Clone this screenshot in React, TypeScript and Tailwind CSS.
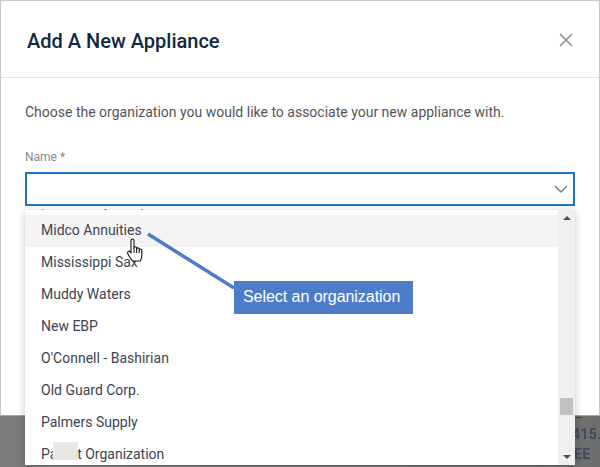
const items = [
  "Mississippi Sax",
  "Muddy Waters",
  "New EBP",
  "O'Connell - Bashirian",
  "Old Guard Corp.",
  "Palmers Supply",
];

function HandCursor() {
  return (
    <svg width="18" height="26" viewBox="0 0 18 26" className="absolute left-[126px] top-[238px]">
      <path
        d="M5 2.500c0-2 3-2 3 0V10c0-1.600 2.600-1.600 2.600 0v1c0-1.500 2.600-1.500 2.600 0v1c0-1.400 2.600-1.400 2.600 0v5.500c0 2.500-.7 3.500-1.500 5.500H6.500C5 21 3.500 19.500 1.800 15.500c-.8-2 1.400-3.200 2.500-1.500L5 15z"
        fill="#fff"
        stroke="#111"
        strokeWidth="1.100"
        strokeLinejoin="round"
      />
      <path d="M8 10v5M10.600 11v4M13.200 12v3" stroke="#111" strokeWidth="1" fill="none" />
    </svg>
  );
}

export default function App() {
  return (
    <div className="relative h-[467px] w-[600px] overflow-hidden bg-gradient-to-r from-[#7c7c7c] to-[#6f6f6f] font-['Roboto',sans-serif]">
      <div className="h-[416px] border-x border-t border-b border-x-[#c8c8c8] border-t-[#c8c8c8] border-b-[#a6a6a6] bg-white">
        <div className="flex h-[77px] items-center justify-between border-b border-[#e2e2e2] pl-[26px] pr-[26px]">
          <h1 className="mt-[4px] text-[20px] font-medium text-[#10293f]">Add A New Appliance</h1>
          <svg width="14" height="14" viewBox="0 0 14 14" className="mt-[1px]">
            <path d="M1 1l12 12M13 1L1 13" stroke="#8c8c8c" strokeWidth="1.500" fill="none" />
          </svg>
        </div>
        <div className="px-6 pt-[24px]">
          <p className="text-[14px] leading-[20px] text-[#555]">
            Choose the organization you would like to associate your new appliance with.
          </p>
          <label className="mt-[27px] block text-[12px] leading-[16px] text-[#8a8a8a]">Name *</label>
          <div className="mt-[7px] flex h-[34px] items-center justify-end border-2 border-[#1f73c4] pr-[5px]">
            <svg width="14" height="9" viewBox="0 0 14 9">
              <path d="M1 1l6 6 6-6" stroke="#777" strokeWidth="1.400" fill="none" />
            </svg>
          </div>
          <p className="mt-[1px] pl-[9px] text-[12px] leading-[16px] text-[#777]">The name is for appliance</p>
        </div>
      </div>

      <div className="absolute left-[575px] top-[417px] h-[1px] w-[7px] bg-[#444]" />
      <div className="absolute left-[572px] top-[425px] text-[14.500px] font-bold leading-[20px] text-[#3f4b5c] blur-[0.4px]">
        <div>415.</div>
        <div className="pl-[2px]">EE</div>
      </div>

      <div className="absolute left-[25px] top-[210px] flex h-[255px] w-[550px] bg-white shadow-[0_2px_8px_rgba(0,0,0,0.22)]">
        <div className="min-w-0 flex-1 pt-[5px] text-[14px] text-[#3d4450]">
          <div className="flex h-[32px] items-center bg-[#f4f4f4] pb-[2px] pl-4">Midco Annuities</div>
          {items.map((name) => (
            <div key={name} className="flex h-[32px] items-center pb-[2px] pl-4">
              {name}
            </div>
          ))}
          <div className="relative flex h-[32px] items-center pb-[2px] pl-4">
            Parent Organization
            <div className="absolute left-[28px] top-[3px] h-[18px] w-[25px] bg-[#e9e6e4]" />
          </div>
        </div>
        <div className="relative flex w-[17px] flex-col items-center justify-between bg-[#f0f0f0] py-[6px]">
          <div className="h-0 w-0 border-x-[4px] border-b-[4px] border-x-transparent border-b-[#505050]" />
          <div className="absolute left-[2px] top-[188px] h-[17px] w-[13px] bg-[#c1c1c1]" />
          <div className="h-0 w-0 border-x-[4px] border-t-[4px] border-x-transparent border-t-[#505050]" />
        </div>
      </div>

      <svg width="90" height="60" viewBox="0 0 90 60" className="absolute left-[146px] top-[232px]">
        <path d="M2 2L88 56" stroke="#4f7cc9" strokeWidth="3.500" fill="none" />
      </svg>
      <HandCursor />
      <div className="absolute left-[234px] top-[281px] flex h-[33px] w-[179px] items-center bg-[#4f7cc9] pb-[2px] pl-[9px] font-['Liberation_Sans',sans-serif] text-[16px] tracking-[-0.05px] text-white">
        Select an organization
      </div>
    </div>
  );
}
